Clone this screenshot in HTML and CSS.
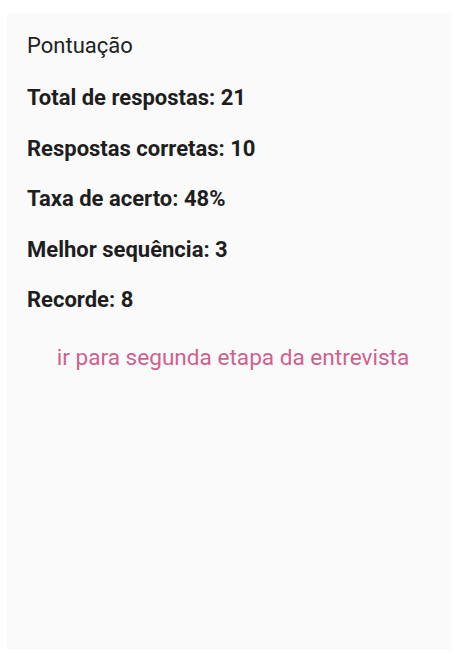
FILE: index.html
```html
<!DOCTYPE html>
<html lang="pt-BR">
<head>
<meta charset="utf-8">
<title>Pontuação</title>
<link rel="stylesheet" href="styles.css">
</head>
<body>
<div class="card">
  <h2 class="title">Pontuação</h2>
  <ul class="stats">
    <li class="stat">Total de respostas: 21</li>
    <li class="stat">Respostas corretas: 10</li>
    <li class="stat">Taxa de acerto: 48%</li>
    <li class="stat">Melhor sequência: 3</li>
    <li class="stat">Recorde: 8</li>
  </ul>
  <a class="next-link" href="#">ir para segunda etapa da entrevista</a>
</div>
</body>
</html>
```
FILE: styles.css
```css
html, body {
  margin: 0;
  padding: 0;
  background: #ffffff;
}

body {
  padding: 14px 3px 0 8px;
  font-family: Roboto, "Liberation Sans", Arial, sans-serif;
}

.card {
  height: 636px;
  box-sizing: border-box;
  background: #fafafa;
  box-shadow: 0 0 2px rgba(0, 0, 0, 0.06);
  padding: 19px 19px 0 19px;
  display: flex;
  flex-direction: column;
}

.title {
  margin: 0 0 14px 0;
  font-size: 22px;
  font-weight: 400;
  line-height: 26px;
  color: #222222;
}

.stats {
  list-style: none;
  margin: 0;
  padding: 0;
}

.stat {
  font-size: 22px;
  font-weight: 700;
  line-height: 50.5px;
  color: #1e1e1e;
}

.next-link {
  align-self: center;
  margin-top: 19px;
  margin-left: 8px;
  font-size: 22.6px;
  line-height: 26px;
  color: #d0608f;
  text-decoration: none;
}
```
